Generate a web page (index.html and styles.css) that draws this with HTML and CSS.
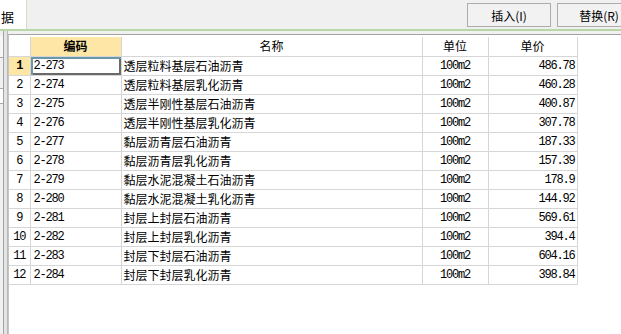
FILE: index.html
```html
<!DOCTYPE html>
<html>
<head>
<meta charset="utf-8">
<link rel="stylesheet" href="styles.css">
</head>
<body>
<div class="topbar">
  <div class="tab">据</div>
  <div class="btns">
    <button class="btn">插入(I)</button>
    <button class="btn">替换(R)</button>
  </div>
</div>
<div class="main">
  <div class="leftpanel">
    <div class="lp-box1"></div>
    <div class="lp-box2"></div>
  </div>
  <div class="splitter"></div>
  <div class="gridwrap">
    <table class="grid">
      <colgroup>
        <col class="w0"><col class="w1"><col class="w2"><col class="w3"><col class="w4">
      </colgroup>
      <thead>
        <tr><th class="corner"></th><th class="sel-col">编码</th><th>名称</th><th>单位</th><th>单价</th></tr>
      </thead>
      <tbody>
        <tr><td class="rh sel-row">1</td><td class="code active">2-273</td><td class="name">透层粒料基层石油沥青</td><td class="unit">100m2</td><td class="num">486.78</td></tr>
        <tr><td class="rh">2</td><td class="code">2-274</td><td class="name">透层粒料基层乳化沥青</td><td class="unit">100m2</td><td class="num">460.28</td></tr>
        <tr><td class="rh">3</td><td class="code">2-275</td><td class="name">透层半刚性基层石油沥青</td><td class="unit">100m2</td><td class="num">400.87</td></tr>
        <tr><td class="rh">4</td><td class="code">2-276</td><td class="name">透层半刚性基层乳化沥青</td><td class="unit">100m2</td><td class="num">307.78</td></tr>
        <tr><td class="rh">5</td><td class="code">2-277</td><td class="name">黏层沥青层石油沥青</td><td class="unit">100m2</td><td class="num">187.33</td></tr>
        <tr><td class="rh">6</td><td class="code">2-278</td><td class="name">黏层沥青层乳化沥青</td><td class="unit">100m2</td><td class="num">157.39</td></tr>
        <tr><td class="rh">7</td><td class="code">2-279</td><td class="name">黏层水泥混凝土石油沥青</td><td class="unit">100m2</td><td class="num">178.9</td></tr>
        <tr><td class="rh">8</td><td class="code">2-280</td><td class="name">黏层水泥混凝土乳化沥青</td><td class="unit">100m2</td><td class="num">144.92</td></tr>
        <tr><td class="rh">9</td><td class="code">2-281</td><td class="name">封层上封层石油沥青</td><td class="unit">100m2</td><td class="num">569.61</td></tr>
        <tr><td class="rh">10</td><td class="code">2-282</td><td class="name">封层上封层乳化沥青</td><td class="unit">100m2</td><td class="num">394.4</td></tr>
        <tr><td class="rh">11</td><td class="code">2-283</td><td class="name">封层下封层石油沥青</td><td class="unit">100m2</td><td class="num">604.16</td></tr>
        <tr><td class="rh">12</td><td class="code">2-284</td><td class="name">封层下封层乳化沥青</td><td class="unit">100m2</td><td class="num">398.84</td></tr>
      </tbody>
    </table>
  </div>
</div>
</body>
</html>
```
FILE: styles.css
```css
html, body {
  margin: 0;
  padding: 0;
  overflow: hidden;
}
body {
  width: 621px;
  height: 334px;
  background: #f0f0f0;
  font-family: "Noto Sans CJK SC", sans-serif;
  font-size: 12px;
  color: #000;
}
.topbar {
  height: 29px;
  display: flex;
  border-bottom: 2px solid #b9d6a6;
}
.tab {
  width: 27px;
  background: #fff;
  border-right: 1px solid #cfdfc6;
  font-size: 13px;
  line-height: 18px;
  padding: 8px 0 0 1px;
  box-sizing: border-box;
}
.btns {
  margin-left: auto;
  margin-right: -20px;
  display: flex;
  gap: 6px;
  padding-top: 3px;
}
.btn {
  width: 84px;
  height: 24px;
  padding: 0;
  border: 1px solid #acacac;
  background: #f2f2f2;
  font-family: "Noto Sans CJK SC", sans-serif;
  font-size: 12px;
  color: #000;
}
.main {
  display: flex;
  height: 303px;
}
.leftpanel {
  width: 3px;
  padding-top: 5px;
  display: flex;
  flex-direction: column;
}
.lp-box1 {
  height: 21px;
  background: #f7f7f7;
  border-bottom: 1px solid #a8a8a8;
}
.lp-box2 {
  margin-top: 30px;
  height: 14px;
  background: #fff;
  border-top: 1px solid #a8a8a8;
  border-bottom: 1px solid #a8a8a8;
}
.splitter {
  width: 3px;
  border-left: 1px solid #a3a3a3;
  border-right: 1px solid #b8b8b8;
  background: #e4e4e4;
}
.gridwrap {
  flex: 1;
  margin-top: 3px;
  background: #fff;
  border-top: 1px solid #a3a3a3;
  border-left: 1px solid #c4c4c4;
  padding-top: 2px;
}
.grid {
  border-collapse: collapse;
  table-layout: fixed;
  width: 568px;
}
.w0 { width: 21px; }
.w1 { width: 91px; }
.w2 { width: 301px; }
.w3 { width: 66px; }
.w4 { width: 89px; }
.grid tr {
  height: 19px;
}
.grid th, .grid td {
  border: 1px solid #d6d6d6;
  padding: 0;
  height: 18px;
  line-height: 16px;
  white-space: nowrap;
  overflow: hidden;
}
.grid th {
  border-top: none;
  font-weight: normal;
  text-align: center;
  background: #fff;
}
.grid th:first-child, .grid td:first-child {
  border-left: none;
}
.grid th.sel-col {
  background: #fde6a6;
  font-weight: bold;
}
.rh, .code, .unit, .num {
  font-family: "Liberation Mono", monospace;
  font-size: 12px;
  letter-spacing: -1.2px;
}
.rh {
  text-align: center;
}
.rh.sel-row {
  background: #fde6a6;
  font-weight: bold;
}
.code {
  padding-left: 3px !important;
}
.code.active {
  box-shadow: inset 2px 2px 0 #6b98a8, inset -2px -2px 0 #6a6a6a;
}
.name {
  padding-left: 2px !important;
}
.unit {
  text-align: center;
}
.num {
  text-align: right;
  padding-right: 2px !important;
}
```
